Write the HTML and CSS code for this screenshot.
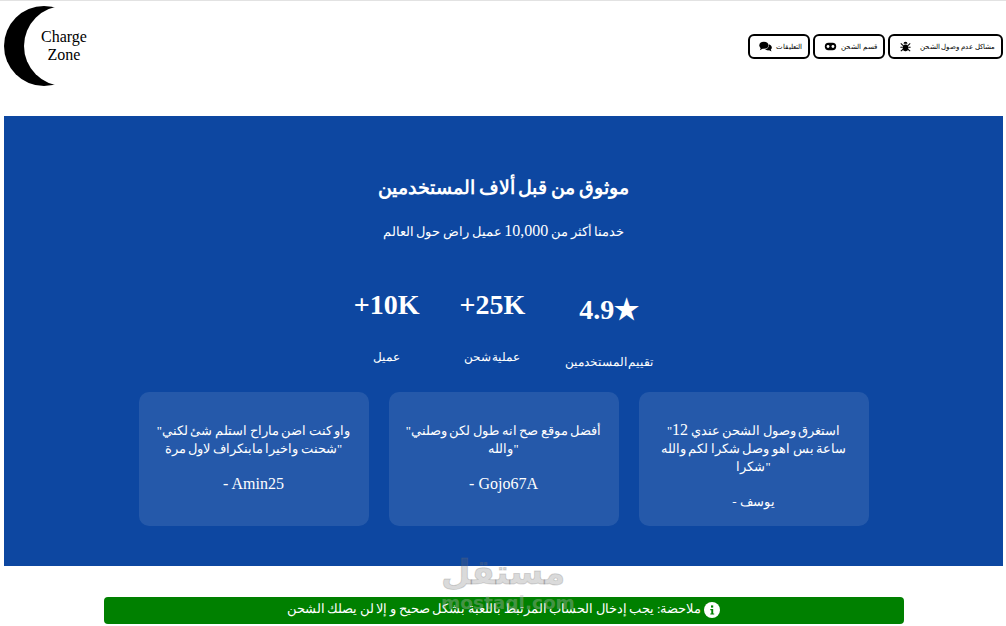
FILE: index.html
```html
<!DOCTYPE html>
<html lang="ar">
<head>
<meta charset="utf-8">
<title>Charge Zone</title>
<link rel="stylesheet" href="styles.css">
</head>
<body>
<div class="page">
  <header class="topbar">
    <div class="logo"><span>Charge Zone</span></div>
    <nav class="nav">
      <a class="nav-btn">
        <svg class="ico" viewBox="0 0 16 13"><ellipse cx="6" cy="5" rx="5.6" ry="4.4"/><path d="M2.5 7.5 1 11l4-2z"/><path d="M11.8 3.6c2.4.5 4 2.2 4 4 0 1.100-.5 2-1.300 2.700l.9 2.300-3-1.400c-1.900.3-3.900-.3-5-1.500 3.400 0 5.400-2.900 4.400-6.600z"/></svg>
        <span>التعليقات</span>
      </a>
      <a class="nav-btn">
        <svg class="ico" viewBox="0 0 16 11"><rect x="1" y="1" width="14" height="9" rx="4.500"/><circle cx="5" cy="5.500" r="1.700" fill="#fff"/><circle cx="11" cy="5.500" r="1.700" fill="#fff"/></svg>
        <span>قسم الشحن</span>
      </a>
      <a class="nav-btn nav-btn-wide">
        <svg class="ico" viewBox="0 0 14 14"><path d="M4.500 3.500a2.500 2.500 0 0 1 5 0z"/><rect x="3.500" y="4.500" width="7" height="8.500" rx="3"/><path d="M1 3l3 3M13 3l-3 3M.5 8h3M13.500 8h-3M1 13l3-2.500M13 13l-3-2.500" stroke="#000" stroke-width="1.300" fill="none"/></svg>
        <span>مشاكل عدم وصول الشحن</span>
      </a>
    </nav>
  </header>

  <section class="trust">
    <h2 class="trust-title">موثوق من قبل ألاف المستخدمين</h2>
    <p class="trust-sub">خدمنا أكثر من <span class="num">10,000</span> عميل راض حول العالم</p>
    <div class="stats">
      <div class="stat"><h3 class="stat-num">+10K</h3><p class="stat-label">عميل</p></div>
      <div class="stat"><h3 class="stat-num">+25K</h3><p class="stat-label">عملية شحن</p></div>
      <div class="stat stat-rating"><h3 class="stat-num">4.9★</h3><p class="stat-label">تقييم المستخدمين</p></div>
    </div>
    <div class="reviews">
      <article class="review">
        <p class="quote">"واو كنت اضن ماراح استلم شئ لكني<br>شحنت واخيرا مابنكراف لاول مرة"</p>
        <p class="author">- Amin25</p>
      </article>
      <article class="review">
        <p class="quote">"أفضل موقع صح انه طول لكن وصلني<br>والله"</p>
        <p class="author">- Gojo67A</p>
      </article>
      <article class="review">
        <p class="quote">"استغرق وصول الشحن عندي <span class="num">12</span><br>ساعة بس اهو وصل شكرا لكم والله<br>شكرا"</p>
        <p class="author author-ar">- يوسف</p>
      </article>
    </div>
  </section>

  <div class="notice">
    <svg class="info" viewBox="0 0 16 16"><circle cx="8" cy="8" r="8" fill="#fff"/><rect x="7" y="3.400" width="2.200" height="2.200" fill="#008000"/><path d="M6.300 7h2.900v4.400h1v1.200H6.300v-1.200h1V8.200h-1z" fill="#008000"/></svg>
    <span class="notice-text">ملاحضة: يجب إدخال الحساب المرتبط باللعبة بشكل صحيح و إلا لن يصلك الشحن</span>
  </div>
</div>
<div class="watermark"><div class="wm-ar">مستقل</div><div class="wm-en">mostaql.com</div></div>
</body>
</html>
```
FILE: styles.css
```css
html, body { margin: 0; padding: 0; background: #fff; }
body { font-family: "Liberation Serif", "Times New Roman", serif; color: #000; position: relative; height: 626px; overflow: hidden; }
.page { border-top: 1px solid #e2e2e2; padding: 0 3px 0 4px; }
.topbar { display: flex; justify-content: space-between; align-items: center; padding: 5px 0 30px; }
.logo { width: 80px; height: 80px; margin-left: 20px; border-radius: 50%; box-shadow: -20px 0 0 #000; display: flex; align-items: center; justify-content: center; text-align: center; font-size: 16px; line-height: 18px; }
.nav { display: flex; gap: 3px; }
.nav-btn { display: flex; align-items: center; gap: 4px; height: 25px; box-sizing: border-box; padding: 0 6px 0 9px; border: 2px solid #000; border-radius: 6px; font-size: 7.300px; background: #fff; color: #000; }
.nav-btn-wide { gap: 8px; }
.ico { width: 13px; height: 11px; fill: #000; display: block; }
.trust { background: #0d47a1; color: #fff; text-align: center; height: 450px; box-sizing: border-box; padding-top: 60px; }
.trust-title { margin: 0; font-size: 18.500px; line-height: 24px; font-weight: bold; word-spacing: -0.700px; }
.trust-sub { margin: 22px 0 0; font-size: 12.700px; line-height: 20px; word-spacing: -0.500px; }
.num { font-size: 16px; line-height: 0; }
.stats { display: flex; justify-content: center; gap: 40px; margin-top: 47px; }
.stat-num { margin: 0; font-size: 28px; font-weight: bold; }
.stat-rating { padding-top: 4px; }
.stat-label { margin: 27px 0 0; font-size: 11.500px; line-height: 18px; word-spacing: -2px; }
.reviews { display: flex; justify-content: center; gap: 20px; margin-top: 21px; }
.review { width: 230px; box-sizing: border-box; padding: 30px 15px 15px; background: rgba(255,255,255,.1); border-radius: 10px; }
.quote { margin: 0; font-size: 12.500px; line-height: 18px; white-space: nowrap; word-spacing: -0.600px; }
.author { margin: 17px 0 0; font-size: 16px; line-height: 18px; }
.author-ar { font-size: 13px; }
.notice { width: 800px; height: 27px; margin: 31px auto 0; background: #008000; color: #fff; border-radius: 4px; display: flex; flex-direction: row-reverse; align-items: center; justify-content: center; gap: 3px; font-size: 12.500px; word-spacing: -0.500px; }
.notice-text { margin-bottom: 3px; }
.info { width: 16px; height: 16px; display: block; margin-bottom: 2px; }
.watermark { position: absolute; left: 441px; top: 550px; width: 124px; text-align: center; font-family: "DejaVu Sans", sans-serif; font-weight: bold; pointer-events: none; }
.wm-ar { font-size: 34px; line-height: 44px; color: rgba(110,110,110,.26); -webkit-text-stroke: 1px rgba(110,110,110,.26); }
.wm-en { font-size: 18.500px; line-height: 20px; margin-top: -1px; color: rgba(180,180,180,.4); }
```
